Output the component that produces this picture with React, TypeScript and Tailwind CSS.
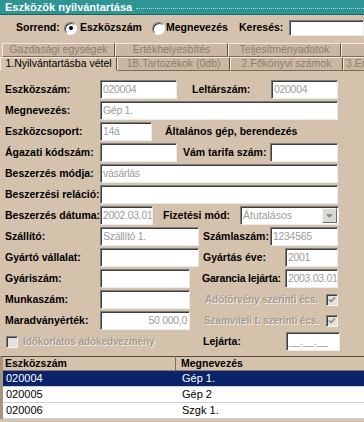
import React from 'react';

const sunken =
  'bg-white border border-t-[#7c7c7c] border-l-[#7c7c7c] border-b-[#ececec] border-r-[#ececec] shadow-[inset_1px_1px_0_#3f3f3f]';

function Input({ className, value, right }: { className: string; value?: string; right?: boolean }) {
  return (
    <div
      className={`${sunken} ${className} h-[19px] shrink-0 overflow-hidden whitespace-nowrap px-[2px] text-[10.5px] leading-[17px] tracking-[-0.3px] text-[#9c9c9c] ${
        right ? 'text-right' : ''
      }`}
    >
      {value}
    </div>
  );
}

function Label({ className, children }: { className: string; children: React.ReactNode }) {
  return (
    <div className={`${className} shrink-0 whitespace-nowrap text-[10.5px] font-bold text-black`}>{children}</div>
  );
}

function GreyLabel({ children }: { children: React.ReactNode }) {
  return (
    <div className="whitespace-nowrap text-[10px] font-bold tracking-[-0.1px] text-[#a59c92] [text-shadow:1px_1px_0_#f3ece4]">
      {children}
    </div>
  );
}

function CheckBox({ checked }: { checked?: boolean }) {
  return (
    <div className="flex h-[12px] w-[12px] shrink-0 items-center justify-center border border-t-[#7c7c7c] border-l-[#7c7c7c] border-b-[#f4f4f4] border-r-[#f4f4f4] bg-[#e4e0dc] shadow-[inset_1px_1px_0_#404040]">
      {checked && (
        <svg width="8" height="8" viewBox="0 0 8 8">
          <path d="M1 3.5 L3 5.5 L7 1.5" stroke="#8c8c8c" strokeWidth="1.6" fill="none" />
        </svg>
      )}
    </div>
  );
}

function Radio({ on }: { on?: boolean }) {
  return (
    <div className="flex h-[13px] w-[13px] items-center justify-center rounded-full border border-[#7c7c7c] border-b-white border-r-white bg-white shadow-[inset_1px_1px_0_#404040]">
      {on && <div className="h-[4px] w-[4px] rounded-full bg-black" />}
    </div>
  );
}

const tabsTop = ['Gazdasági egységek', 'Értékhelyesbítés', 'Teljesítményadatok', ''];
const tabsBottom = ['1.Nyilvántartásba vétel', '1B.Tartozékok (0db)', '2.Főkönyvi számok', '3.Ért'];

const rows = [
  { no: '020004', name: 'Gép 1.', sel: true },
  { no: '020005', name: 'Gép 2', sel: false },
  { no: '020006', name: 'Szgk 1.', sel: false },
];

export default function App() {
  return (
    <div className="h-[422px] w-[364px] overflow-hidden bg-[#d5c2ac] font-['Liberation_Sans',Arial,sans-serif] text-black">
      {/* címsor */}
      <div className="flex h-[15px] items-center border-b border-[#1c6262] bg-[#2f9494] pl-[5px]">
        <span className="whitespace-nowrap text-[11px] font-bold text-white">Eszközök nyilvántartása</span>
        <div className="ml-[4px] mt-[3px] flex-1 border-b border-dotted border-[#9fdcdc]" />
      </div>

      {/* rendezés, keresés */}
      <div className="mt-[5px] flex h-[16px] items-center">
        <span className="ml-[16px] w-[48px] text-[10.5px] font-bold">Sorrend:</span>
        <Radio on />
        <span className="ml-[3px] w-[72px] text-[10.5px] font-bold">Eszközszám</span>
        <Radio />
        <span className="ml-[1px] w-[73px] text-[10.5px] font-bold">Megnevezés</span>
        <span className="w-[50px] text-[10.5px] font-bold">Keresés:</span>
        <div className={`${sunken} h-[16px] flex-1`} />
      </div>

      {/* fülek */}
      <div className="mt-[7px] flex h-[14px] pl-[2px]">
        {tabsTop.map((t, i) => (
          <div
            key={i}
            className={`flex h-[14px] shrink-0 items-center justify-center overflow-hidden whitespace-nowrap border border-t-[#f1e8de] border-l-[#f1e8de] border-b-[#7e6c58] border-r-[#5e4e3e] bg-[#cbb7a1] text-[10.5px] text-[#8c7f71] ${
              i === 3 ? 'w-[30px]' : 'w-[113px]'
            }`}
          >
            {t}
          </div>
        ))}
      </div>
      <div className="flex h-[14px]">
        {tabsBottom.map((t, i) => (
          <div
            key={i}
            className={`flex h-[14px] shrink-0 items-center overflow-hidden whitespace-nowrap border text-[10.5px] ${
              i === 0
                ? 'w-[117px] justify-center border-t-[#f1e8de] border-l-[#f1e8de] border-b-transparent border-r-[#5e4e3e] bg-[#d5c2ac] text-black'
                : i === 3
                  ? 'w-[30px] border-t-[#f1e8de] border-l-[#f1e8de] border-b-[#7e6c58] border-r-[#5e4e3e] bg-[#cbb7a1] pl-[2px] text-[#8c7f71]'
                  : 'w-[113px] justify-center border-t-[#f1e8de] border-l-[#f1e8de] border-b-[#7e6c58] border-r-[#5e4e3e] bg-[#cbb7a1] text-[#8c7f71]'
            }`}
          >
            {t}
          </div>
        ))}
      </div>

      {/* űrlap */}
      <div className="mt-[9px] flex flex-col gap-[2px]">
        <div className="flex h-[19px] items-center">
          <Label className="w-[100px] pl-[5px]">Eszközszám:</Label>
          <Input className="w-[77px]" value="020004" />
          <Label className="w-[94px] pl-[15px]">Leltárszám:</Label>
          <Input className="w-[67px]" value="020004" />
        </div>
        <div className="flex h-[19px] items-center">
          <Label className="w-[100px] pl-[5px]">Megnevezés:</Label>
          <Input className="w-[238px]" value="Gép 1." />
        </div>
        <div className="flex h-[19px] items-center">
          <Label className="w-[100px] pl-[5px]">Eszközcsoport:</Label>
          <Input className="w-[52px]" value="14á" />
          <Label className="pl-[13px]">Általános gép, berendezés</Label>
        </div>
        <div className="flex h-[19px] items-center">
          <Label className="w-[100px] pl-[5px]">Ágazati kódszám:</Label>
          <Input className="w-[77px]" />
          <Label className="w-[93px] pl-[6px]">Vám tarifa szám:</Label>
          <Input className="w-[68px]" />
        </div>
        <div className="flex h-[19px] items-center">
          <Label className="w-[100px] pl-[5px]">Beszerzés módja:</Label>
          <Input className="w-[238px]" value="vásárlás" />
        </div>
        <div className="flex h-[19px] items-center">
          <Label className="w-[100px] pl-[5px]">Beszerzési reláció:</Label>
          <Input className="w-[238px]" />
        </div>
        <div className="flex h-[19px] items-center">
          <Label className="w-[100px] pl-[5px]">Beszerzés dátuma:</Label>
          <Input className="w-[53px]" value="2002.03.01" />
          <Label className="w-[87px] pl-[10px]">Fizetési mód:</Label>
          <div className={`${sunken} flex h-[19px] w-[99px] items-center`}>
            <span className="flex-1 pl-[2px] text-[10.5px] text-[#9c9c9c]">Átutalásos</span>
            <div className="mr-[1px] flex h-[15px] w-[15px] items-center justify-center border border-t-[#f4f4f4] border-l-[#f4f4f4] border-b-[#6c6c6c] border-r-[#6c6c6c] bg-[#dcd8d2]">
              <svg width="7" height="4" viewBox="0 0 7 4">
                <path d="M0 0 H7 L3.5 4 Z" fill="#8c8c8c" />
              </svg>
            </div>
          </div>
        </div>
        <div className="flex h-[19px] items-center">
          <Label className="w-[100px] pl-[5px]">Szállító:</Label>
          <Input className="w-[99px]" value="Szállító 1." />
          <Label className="w-[71px] pl-[4px]">Számlaszám:</Label>
          <Input className="w-[68px]" value="1234565" />
        </div>
        <div className="flex h-[19px] items-center">
          <Label className="w-[100px] pl-[5px]">Gyártó vállalat:</Label>
          <Input className="w-[99px]" />
          <Label className="w-[86px] pl-[4px]">Gyártás éve:</Label>
          <Input className="w-[53px]" value="2001" />
        </div>
        <div className="flex h-[19px] items-center">
          <Label className="w-[100px] pl-[5px]">Gyáriszám:</Label>
          <Input className="w-[90px]" />
          <Label className="w-[95px] pl-[12px] tracking-[-0.2px]">Garancia lejárta:</Label>
          <Input className="w-[53px]" value="2003.03.01" />
        </div>
        <div className="flex h-[19px] items-center">
          <Label className="w-[100px] pl-[5px]">Munkaszám:</Label>
          <Input className="w-[90px]" />
          <div className="flex w-[148px] items-center justify-between pl-[15px]">
            <GreyLabel>Adótörvény szerinti écs.</GreyLabel>
            <CheckBox checked />
          </div>
        </div>
        <div className="flex h-[19px] items-center">
          <Label className="w-[100px] pl-[5px]">Maradványérték:</Label>
          <Input className="w-[90px]" value="50 000,0" right />
          <div className="flex w-[148px] items-center justify-between pl-[14px]">
            <GreyLabel>Számviteli t. szerinti écs.</GreyLabel>
            <CheckBox checked />
          </div>
        </div>
        <div className="flex h-[19px] items-center">
          <div className="flex w-[203px] items-center gap-[5px] pl-[6px]">
            <CheckBox />
            <GreyLabel>Időkorlátos adókedvezmény</GreyLabel>
          </div>
          <Label className="w-[83px]">Lejárta:</Label>
          <Input className="w-[54px]" value="__.__.__" />
        </div>
      </div>

      {/* lista */}
      <div className="mt-[5px] border-t border-l-[3px] border-t-[#5a4a3a] border-l-[#a89580]">
        <div className="flex h-[14px] items-center border-b border-[#8c7a66] bg-[#d5c2ac] text-[10.5px] font-bold">
          <div className="w-[173px] border-r border-[#7e6c58] pl-[2px]">Eszközszám</div>
          <div className="pl-[5px]">Megnevezés</div>
        </div>
        {rows.map((r) => (
          <div
            key={r.no}
            className={`flex h-[16px] items-center border-b border-[#d0d0d0] text-[11px] ${
              r.sel ? 'bg-[#0a246a] text-white' : 'bg-white text-black'
            }`}
          >
            <div className="w-[174px] pl-[3px]">{r.no}</div>
            <div className="pl-[5px]">{r.name}</div>
          </div>
        ))}
      </div>
    </div>
  );
}
